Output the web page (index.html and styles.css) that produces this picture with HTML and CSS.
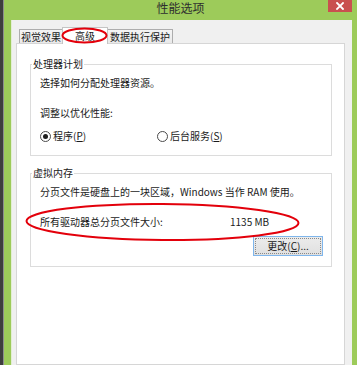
FILE: index.html
```html
<!DOCTYPE html>
<html lang="zh-CN">
<head>
<meta charset="utf-8">
<title>性能选项</title>
<link rel="stylesheet" href="styles.css">
</head>
<body>
<div class="screen">
  <div class="desk"></div>
  <div class="window">
    <div class="titlebar">
      <span class="title">性能选项</span>
      <span class="close">
        <svg width="8" height="8" viewBox="0 0 8 8"><path d="M1 1L7 7M7 1L1 7" stroke="#fff" stroke-width="1.8" stroke-linecap="square"/></svg>
      </span>
    </div>
    <div class="frame">
      <div class="dialog">
        <div class="tabs">
          <div class="tab tab-visual">视觉效果</div>
          <div class="tab tab-adv active">高级</div>
          <div class="tab tab-dep">数据执行保护</div>
        </div>
        <div class="panel">
          <fieldset class="group">
            <legend class="group-title">处理器计划</legend>
            <div class="group-body">
              <p class="line">选择如何分配处理器资源。</p>
              <p class="line line-gap">调整以优化性能:</p>
              <div class="radios">
                <label class="radio-item radio-first"><span class="radio checked"></span><span>程序(<u>P</u>)</span></label>
                <label class="radio-item"><span class="radio"></span><span>后台服务(<u>S</u>)</span></label>
              </div>
            </div>
          </fieldset>
          <fieldset class="group group-vm">
            <legend class="group-title">虚拟内存</legend>
            <div class="group-body">
              <p class="line">分页文件是硬盘上的一块区域，Windows 当作 RAM 使用。</p>
              <div class="line line-gap size-row"><span>所有驱动器总分页文件大小:</span><span>1135 MB</span></div>
              <button class="btn"><span class="btn-label">更改(<u>C</u>)...</span></button>
            </div>
          </fieldset>
        </div>
      </div>
    </div>
  </div>
  <svg class="marks" width="357" height="365" viewBox="0 0 357 365">
    <ellipse cx="84.5" cy="35.5" rx="22" ry="7" fill="none" stroke="#e3000b" stroke-width="2"/>
    <ellipse cx="162.5" cy="222" rx="136" ry="18" fill="none" stroke="#e3000b" stroke-width="2" transform="rotate(0.4 162.5 222)"/>
  </svg>
</div>
</body>
</html>
```
FILE: styles.css
```css
* { box-sizing: border-box; }
html, body { margin: 0; padding: 0; }
body {
  width: 357px;
  height: 365px;
  overflow: hidden;
  font-family: "Noto Sans CJK SC", "Microsoft YaHei", sans-serif;
  font-size: 10px;
  line-height: 12px;
  color: #1a1a1a;
  background: #fff;
}
.screen {
  position: relative;
  display: flex;
  width: 357px;
  height: 365px;
}
.desk {
  width: 4px;
  background: linear-gradient(to right, #3e3e3e 0 3px, #8e8e8e 3px 4px);
}
.window {
  flex: 1;
  display: flex;
  flex-direction: column;
  background: #9dcb5a;
}
.titlebar {
  height: 20px;
  flex: none;
  display: grid;
  grid-template-columns: 1fr auto 1fr;
  align-items: start;
}
.title {
  grid-column: 2;
  font-size: 12px;
  line-height: 16px;
  color: #2e2e2e;
}
.close {
  grid-column: 3;
  justify-self: end;
  width: 24px;
  height: 12px;
  margin-right: 5px;
  background: #c9504f;
  display: flex;
  align-items: center;
  justify-content: center;
}
.frame {
  flex: 1;
  display: flex;
  padding: 0 5px 0 7px;
}
.dialog {
  flex: 1;
  display: flex;
  flex-direction: column;
  background: #f0f0f0;
  padding: 7px 7px 0 5px;
  box-shadow: inset 1px 0 0 #e2eed2;
}
.tabs {
  display: flex;
  align-items: flex-end;
  padding-left: 3px;
  margin-bottom: -1px;
  position: relative;
  z-index: 1;
}
.tab {
  height: 14px;
  margin-bottom: 1px;
  border: 1px solid #adadad;
  border-bottom: none;
  background: linear-gradient(#f4f4f4, #e9e9e9);
  line-height: 13px;
  text-align: center;
  white-space: nowrap;
}
.tab-visual { width: 44px; }
.tab-adv { width: 46px; margin-left: -1px; }
.tab-dep { width: 66px; margin-left: -1px; }
.tab.active {
  height: 17px;
  margin-bottom: 0;
  background: #fff;
  border-color: #c4c4c4;
  line-height: 16px;
  position: relative;
  z-index: 2;
}
.panel {
  flex: 1;
  background: #fff;
  border: 1px solid #d6d6d6;
  padding: 14px 12px 0 13px;
}
.group {
  margin: 0;
  padding: 0;
  min-width: 0;
  border: 1px solid #dcdcdc;
}
.group-vm { margin-top: 11px; }
.group-title {
  margin-left: 1px;
  padding: 0 1px;
  line-height: 12px;
  font-size: 10px;
  color: #1a1a1a;
}
.group-body {
  display: flex;
  flex-direction: column;
  padding: 7px 8px 13px 9px;
}
.group-vm .group-body { padding-bottom: 10px; }
.line {
  margin: 0;
  line-height: 12px;
  white-space: nowrap;
}
.line-gap { margin-top: 18px; }
.radios {
  display: flex;
  margin-top: 11px;
  height: 12px;
  align-items: center;
}
.radio-item {
  display: flex;
  align-items: center;
  gap: 2px;
}
.radio-first { width: 117px; }
.radio {
  width: 11px;
  height: 11px;
  border: 1px solid #4a4a4a;
  border-radius: 50%;
  background: #fff;
  display: grid;
  place-items: center;
}
.radio.checked::after {
  content: "";
  width: 5px;
  height: 5px;
  border-radius: 50%;
  background: #1e1e1e;
}
.size-row {
  display: grid;
  grid-template-columns: 190px auto;
}
.btn {
  align-self: flex-end;
  margin-top: 8px;
  width: 70px;
  height: 20px;
  padding: 0;
  border: 1px solid #7fb6ec;
  background: linear-gradient(#ececec, #e0e0e0);
  font: inherit;
  color: #1a1a1a;
  display: flex;
}
.btn-label {
  flex: 1;
  margin: 1px;
  border: 1px dotted #8a8a8a;
  display: flex;
  align-items: center;
  justify-content: center;
  line-height: 12px;
}
.marks {
  position: absolute;
  left: 0;
  top: 0;
  z-index: 10;
  pointer-events: none;
}
```
